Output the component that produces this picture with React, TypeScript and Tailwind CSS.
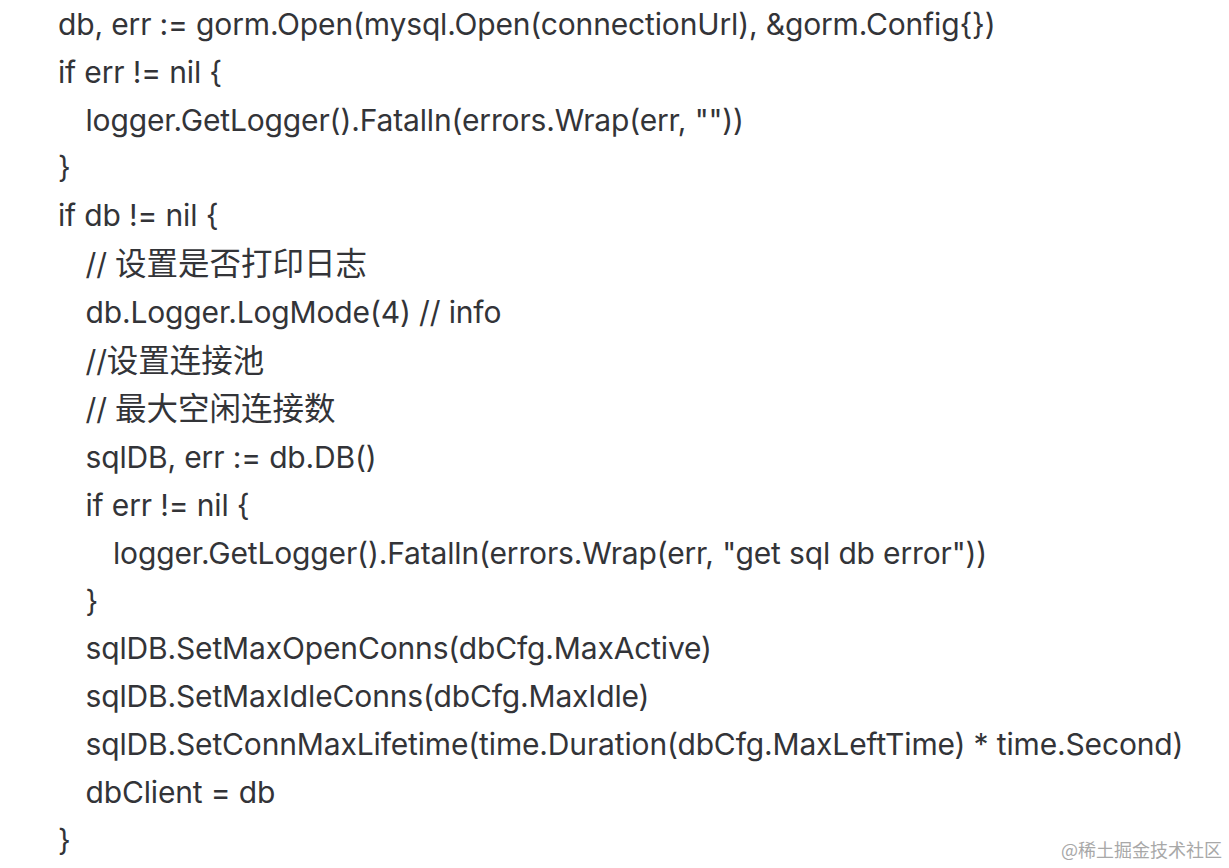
import React from "react";

const lines: { indent: number; text: string }[] = [
  { indent: 0, text: "db, err := gorm.Open(mysql.Open(connectionUrl), &gorm.Config{})" },
  { indent: 0, text: "if err != nil {" },
  { indent: 1, text: 'logger.GetLogger().Fatalln(errors.Wrap(err, ""))' },
  { indent: 0, text: "}" },
  { indent: 0, text: "if db != nil {" },
  { indent: 1, text: "// 设置是否打印日志" },
  { indent: 1, text: "db.Logger.LogMode(4) // info" },
  { indent: 1, text: "//设置连接池" },
  { indent: 1, text: "// 最大空闲连接数" },
  { indent: 1, text: "sqlDB, err := db.DB()" },
  { indent: 1, text: "if err != nil {" },
  { indent: 2, text: 'logger.GetLogger().Fatalln(errors.Wrap(err, "get sql db error"))' },
  { indent: 1, text: "}" },
  { indent: 1, text: "sqlDB.SetMaxOpenConns(dbCfg.MaxActive)" },
  { indent: 1, text: "sqlDB.SetMaxIdleConns(dbCfg.MaxIdle)" },
  { indent: 1, text: "sqlDB.SetConnMaxLifetime(time.Duration(dbCfg.MaxLeftTime) * time.Second)" },
  { indent: 1, text: "dbClient = db" },
  { indent: 0, text: "}" },
];

const indentClass = ["pl-0", "pl-[27.5px]", "pl-[55px]"];

// Chinese runs render a bit larger than the latin text in the source
const renderLine = (text: string) =>
  text.split(/([\u4e00-\u9fff]+)/).map((part, i) =>
    /[\u4e00-\u9fff]/.test(part) ? (
      <span key={i} className="text-[31.5px] tracking-normal">
        {part}
      </span>
    ) : (
      <React.Fragment key={i}>{part}</React.Fragment>
    )
  );

export default function App() {
  return (
    <div className="relative w-[1229px] h-[868px] bg-white overflow-hidden">
      <div
        className="pl-[58px] pt-[1px] text-[30px] leading-[47.8px] tracking-[-0.15px] text-[#333438]"
        style={{ fontFamily: 'Inter, "Noto Sans CJK SC", sans-serif' }}
      >
        {lines.map((l, i) => (
          <div key={i} className={`whitespace-pre ${indentClass[l.indent]}`}>
            {renderLine(l.text)}
          </div>
        ))}
      </div>
      <div
        className="absolute right-[7px] bottom-[5px] text-[18px] text-[#a8a8a8]"
        style={{ fontFamily: '"Noto Sans CJK SC", sans-serif' }}
      >
        @稀土掘金技术社区
      </div>
    </div>
  );
}
